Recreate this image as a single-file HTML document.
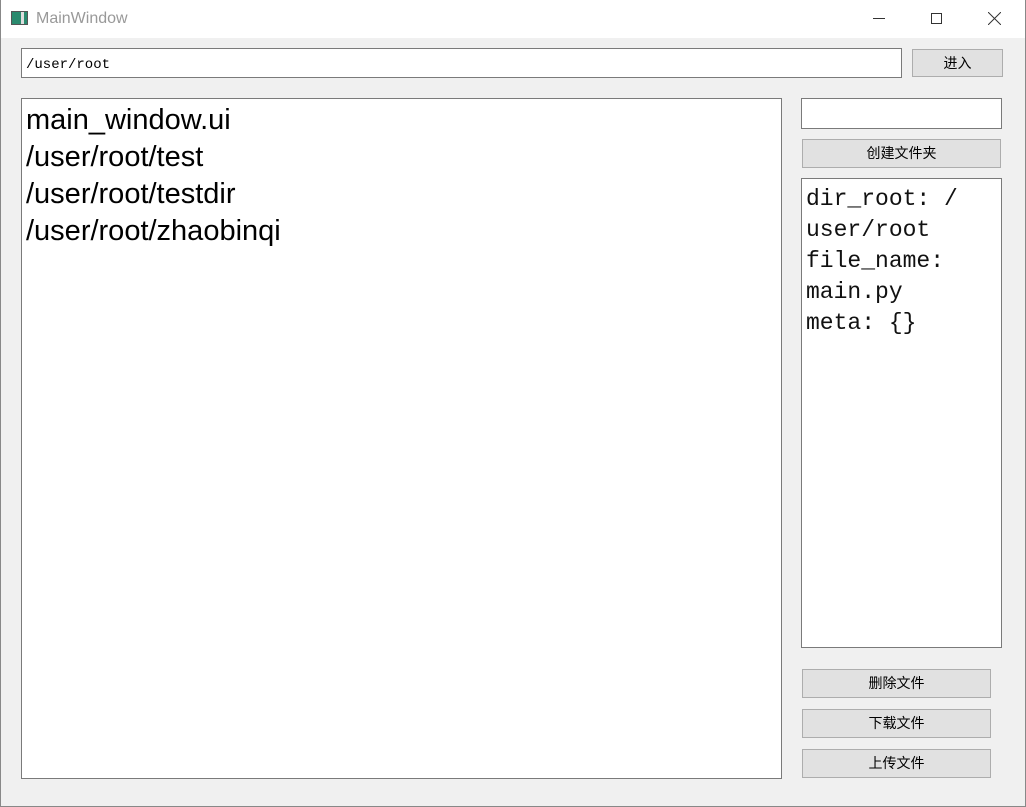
<!DOCTYPE html>
<html><head><meta charset="utf-8"><style>
body{margin:0;width:1026px;height:807px;background:#f0f0f0;position:relative;overflow:hidden;font-family:"Liberation Sans","Noto Sans CJK SC",sans-serif;}
.a{position:absolute;box-sizing:border-box;}
.title{left:0;top:0;width:1026px;height:38px;background:#fff;}
.box{background:#fff;border:1px solid #7a7a7a;}
.btn{background:#e1e1e1;border:1px solid #adadad;font-size:14px;text-align:center;color:#000;}
</style></head><body>
<div class="a title">
 <div class="a" style="left:11px;top:11px;width:17px;height:14px;border:1px solid #555;background:linear-gradient(90deg,#2a8a6e 0 60%,#ddd 60% 80%,#2a8a6e 80%);"></div>
 <div class="a" style="left:36px;top:10px;font-size:16px;color:#999;">MainWindow</div>
 <div class="a" style="left:873px;top:18px;width:12px;height:1px;background:#333;"></div>
 <div class="a" style="left:931px;top:13px;width:11px;height:11px;border:1px solid #333;"></div>
 <svg class="a" style="left:988px;top:12px" width="13" height="13"><path d="M0 0L13 13M13 0L0 13" stroke="#333" stroke-width="1"/></svg>
</div>
<div class="a" style="left:0;top:0;width:1026px;height:807px;border:1px solid #888;border-top:none;"></div>
<div class="a box" style="left:21px;top:48px;width:881px;height:30px;font-family:'Liberation Mono',monospace;font-size:14px;padding:8px 0 0 4px;">/user/root</div>
<div class="a btn" style="left:912px;top:49px;width:91px;height:28px;line-height:26px;">进入</div>
<div class="a box" style="left:21px;top:98px;width:761px;height:681px;font-size:29px;line-height:37px;padding:3px 0 0 4px;">main_window.ui<br>/user/root/test<br>/user/root/testdir<br>/user/root/zhaobinqi</div>
<div class="a box" style="left:801px;top:98px;width:201px;height:31px;"></div>
<div class="a btn" style="left:802px;top:139px;width:199px;height:29px;line-height:27px;">创建文件夹</div>
<div class="a box" style="left:801px;top:178px;width:201px;height:470px;font-family:'Liberation Mono',monospace;font-size:23px;line-height:31px;padding:5px 0 0 4px;color:#111;">dir_root: /<br>user/root<br>file_name:<br>main.py<br>meta: {}</div>
<div class="a btn" style="left:802px;top:669px;width:189px;height:29px;line-height:27px;">删除文件</div>
<div class="a btn" style="left:802px;top:709px;width:189px;height:29px;line-height:27px;">下载文件</div>
<div class="a btn" style="left:802px;top:749px;width:189px;height:29px;line-height:27px;">上传文件</div>
</body></html>
